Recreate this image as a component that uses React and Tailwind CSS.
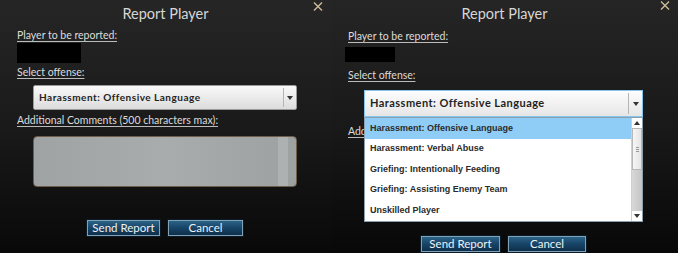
import React from 'react';

const label = "text-[10.5px] leading-[13px] text-[#dcdcdc] underline underline-offset-[2px] decoration-[#bbbbbb]";

const CloseX = ({ className }) => (
  <svg className={className} width="10" height="9" viewBox="0 0 10 9">
    <path d="M1 0.5 L9 8.5 M9 0.5 L1 8.5" stroke="#cbbd98" strokeWidth="1.4" />
  </svg>
);

const Arrow = ({ up }) => (
  <svg width="6" height="4" viewBox="0 0 6 4">
    <path d={up ? "M0 4 L3 0 L6 4 Z" : "M0 0 L6 0 L3 4 Z"} fill="#333" />
  </svg>
);

const Button = ({ children, w }) => (
  <div className={`${w} h-[16px] flex items-center justify-center border border-[#7fa2b8] shadow-[0_0_0_1px_#0b1a24] bg-gradient-to-b from-[#2a6387] via-[#174466] to-[#0f2f4b] text-[11.5px] leading-none text-[#eef3f6]`}>
    {children}
  </div>
);

const offenses = [
  'Harassment: Offensive Language',
  'Harassment: Verbal Abuse',
  'Griefing: Intentionally Feeding',
  'Griefing: Assisting Enemy Team',
  'Unskilled Player',
];

const LeftPanel = () => (
  <div className="relative w-[331px] h-full flex flex-col bg-gradient-to-b from-[#262626] via-[#1a1a1a] to-[#090909]">
    <CloseX className="absolute left-[313px] top-[2px]" />
    <div className="mt-[4px] h-[20px] text-center text-[14.5px] leading-[20px] text-[#d6d6d6]">Report Player</div>
    <div className={`mt-[5px] ml-[17px] ${label}`}>Player to be reported:</div>
    <div className="mt-[1px] ml-[17px] w-[64px] h-[20px] bg-black" />
    <div className={`mt-[3px] ml-[17px] ${label}`}>Select offense:</div>
    <div className="mt-[6px] ml-[33px] w-[264px] h-[25px] flex items-center rounded-[2px] border border-[#9a9a9a] bg-gradient-to-b from-[#fafafa] to-[#dcdcdc]">
      <div className="flex-1 pl-[5px] text-[10px] font-bold tracking-[0.5px] text-[#222]">Harassment: Offensive Language</div>
      <div className="w-[13px] h-[19px] border-l border-[#b5b5b5] flex items-center justify-center">
        <Arrow />
      </div>
    </div>
    <div className={`mt-[4px] ml-[17px] ${label}`}>Additional Comments (500 characters max):</div>
    <div className="mt-[9px] ml-[33px] w-[264px] h-[51px] rounded-[4px] border border-[#6e5d4a] bg-gradient-to-r from-[#9fa3a3] via-[#a8acac] to-[#9da1a1] flex justify-end">
      <div className="w-[10px] h-full mr-[8px] bg-[#adb1b1]" />
    </div>
    <div className="mt-[33px] ml-[87px] flex gap-[8px]">
      <Button w="w-[73px]">Send Report</Button>
      <Button w="w-[75px]">Cancel</Button>
    </div>
  </div>
);

const RightPanel = () => (
  <div className="relative flex-1 h-full flex flex-col bg-gradient-to-b from-[#252525] via-[#191919] to-[#080808]">
    <CloseX className="absolute left-[329px] top-[1px]" />
    <div className="mt-[4px] h-[20px] text-center text-[14.5px] leading-[20px] text-[#d6d6d6]">Report Player</div>
    <div className={`mt-[6px] ml-[17px] ${label}`}>Player to be reported:</div>
    <div className="mt-[4px] ml-[14px] w-[50px] h-[15px] bg-black" />
    <div className={`mt-[7px] ml-[17px] ${label}`}>Select offense:</div>
    <div className="relative mt-[8px] ml-[33px] w-[279px]">
      <div className="h-[27px] flex items-center border border-[#86c4ea] bg-gradient-to-b from-[#fdfdfd] to-[#e6e6e6]">
        <div className="flex-1 pl-[5px] text-[11px] font-bold tracking-[0.45px] text-[#1f1f1f]">Harassment: Offensive Language</div>
        <div className="w-[14px] h-[21px] border-l border-[#b5b5b5] flex items-center justify-center">
          <Arrow />
        </div>
      </div>
      <div className="absolute left-0 top-[27px] w-[279px] h-[105px] flex border border-[#8aa0b0] bg-white">
        <div className="flex-1 flex flex-col" style={{ fontFamily: '"Liberation Sans", Arial, sans-serif' }}>
          {offenses.map((o, i) => (
            <div
              key={o}
              className={`h-[20.6px] flex items-center pl-[5px] text-[9px] font-bold text-[#2b2b2b] ${i === 0 ? 'bg-[#8fcdf6] text-[#1b3550]' : ''}`}
            >
              {o}
            </div>
          ))}
        </div>
        <div className="w-[11px] flex flex-col border-l border-[#d0d0d0] bg-gradient-to-r from-[#d8d8d8] to-[#c4c4c4]">
          <div className="h-[10px] flex items-center justify-center bg-white"><Arrow up /></div>
          <div className="h-[42px] flex items-center justify-center border border-[#b8b8b8] bg-gradient-to-r from-[#f6f6f6] to-[#e4e4e4]">
            <div className="flex flex-col gap-[1px]">
              <div className="w-[3px] h-[1px] bg-[#999]" />
              <div className="w-[3px] h-[1px] bg-[#999]" />
              <div className="w-[3px] h-[1px] bg-[#999]" />
            </div>
          </div>
          <div className="flex-1" />
          <div className="h-[10px] flex items-center justify-center bg-white"><Arrow /></div>
        </div>
      </div>
    </div>
    <div className={`mt-[8px] ml-[17px] ${label}`}>Additional Comments (500 characters max):</div>
    <div className="mt-[98px] ml-[90px] flex gap-[8px]">
      <Button w="w-[79px]">Send Report</Button>
      <Button w="w-[78px]">Cancel</Button>
    </div>
  </div>
);

export default function App() {
  return (
    <div className="w-[678px] h-[253px] flex overflow-hidden bg-black" style={{ fontFamily: 'Lato, "Open Sans", sans-serif' }}>
      <LeftPanel />
      <RightPanel />
    </div>
  );
}
